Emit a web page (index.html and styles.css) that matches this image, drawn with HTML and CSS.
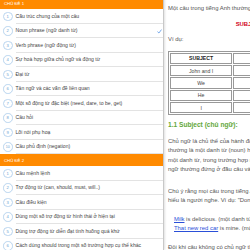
FILE: index.html
```html
<!DOCTYPE html>
<html lang="vi">
<head>
  <meta charset="UTF-8" />
  <meta name="viewport" content="width=device-width, initial-scale=1.0"/>
  <title>Ngữ pháp tiếng Anh</title>
  <link rel="stylesheet" href="styles.css">
</head>
<body>
  <div class="app">
    <aside class="menu">
      <div class="topic">Chủ đề 1</div>
      <ul class="lessons">
        <li><span class="num">1</span><span class="name">Cấu trúc chung của một câu</span></li>
        <li class="selected"><span class="num">2</span><span class="name">Noun phrase (ngữ danh từ)</span>
          <svg class="check" viewBox="0 0 10 10"><path d="M1.5 5.8 L3.8 8 L8.5 1.8" fill="none" stroke="#2f7de1" stroke-width="1.3" stroke-linecap="round" stroke-linejoin="round"/></svg>
        </li>
        <li><span class="num">3</span><span class="name">Verb phrase (ngữ động từ)</span></li>
        <li><span class="num">4</span><span class="name">Sự hoà hợp giữa chủ ngữ và động từ</span></li>
        <li><span class="num">5</span><span class="name">Đại từ</span></li>
        <li><span class="num">6</span><span class="name">Tân ngữ và các vấn đề liên quan</span></li>
        <li><span class="num">7</span><span class="name">Một số động từ đặc biệt (need, dare, to be, get)</span></li>
        <li><span class="num">8</span><span class="name">Câu hỏi</span></li>
        <li><span class="num">9</span><span class="name">Lối nói phụ hoạ</span></li>
        <li><span class="num small">10</span><span class="name">Câu phủ định (negation)</span></li>
      </ul>
      <div class="topic">Chủ đề 2</div>
      <ul class="lessons">
        <li><span class="num">1</span><span class="name">Câu mệnh lệnh</span></li>
        <li><span class="num">2</span><span class="name">Trợ động từ (can, should, must, will..)</span></li>
        <li><span class="num">3</span><span class="name">Câu điều kiện</span></li>
        <li><span class="num">4</span><span class="name">Dùng một số trợ động từ hình thái ở hiện tại</span></li>
        <li><span class="num">5</span><span class="name">Dùng trợ động từ diễn đạt tình huống quá khứ</span></li>
        <li><span class="num">6</span><span class="name">Cách dùng should trong một số trường hợp cụ thể khác</span></li>
      </ul>
    </aside>

    <main class="detail">
      <p class="intro">Một câu trong tiếng Anh thường bao gồm các thành phần sau đây:</p>
      <p class="formula">SUBJECT + VERB + COMPLEMENT + MODIFIER</p>
      <p class="intro">Ví dụ:</p>
      <table class="sample">
        <tr><th>SUBJECT</th><th>VERB</th><th>COMPLEMENT</th><th>MODIFIER</th></tr>
        <tr><td>John and I</td><td>ate</td><td>a pizza</td><td>last night</td></tr>
        <tr><td>We</td><td>studied</td><td>"present perfect"</td><td>last week</td></tr>
        <tr><td>He</td><td>runs</td><td></td><td>very fast</td></tr>
        <tr><td>I</td><td>like</td><td>walking</td><td></td></tr>
      </table>

      <h3 class="heading">1.1 Subject (chủ ngữ):</h3>
      <p class="text first">Chủ ngữ là chủ thể của hành động trong câu, thường đứng trước động từ (verb). Chủ ngữ<br>
        thường là một danh từ (noun) hoặc một ngữ danh từ (noun phrase - một nhóm từ kết thúc bằng<br>
        một danh từ, trong trường hợp này ngữ danh từ không được bắt đầu bằng một giới từ). Chủ<br>
        ngữ thường đứng ở đầu câu và quyết định việc chia động từ.</p>
      <p class="text">Chú ý rằng mọi câu trong tiếng Anh đều có chủ ngữ (Trong câu mệnh lệnh, chủ ngữ được ngầm<br>
        hiểu là người nghe. Ví dụ: "Don't move!" = Đứng im!).</p>
      <p class="text example"><a href="#">Milk</a> is delicious. (một danh từ)<br>
        <a href="#">That new red car</a> is mine. (một ngữ danh từ)</p>
      <p class="text">Đôi khi câu không có chủ ngữ thật sự, trong trường hợp đó, It hoặc There đóng vai trò chủ ngữ giả.</p>
    </main>
  </div>
</body>
</html>
```

FILE: styles.css
```css
body {
  margin: 0;
  padding: 0;
  background: #fff;
  font-family: "Liberation Sans", Arial, sans-serif;
  overflow: hidden;
}
.app {
  display: flex;
  width: 250px;
  height: 250px;
  overflow: hidden;
}
.menu {
  flex: none;
  width: 163px;
  margin-top: -3px;
  border-right: 1px solid #c8c8c8;
  box-shadow: 1px 0 2px rgba(0, 0, 0, 0.12);
  background: #fff;
}
.topic {
  height: 12px;
  padding-left: 4px;
  background: #ff8a00;
  color: #fff;
  font-size: 4.3px;
  line-height: 13px;
  text-transform: uppercase;
}
.lessons {
  list-style: none;
  margin: 0;
  padding: 0;
}
.lessons li {
  display: flex;
  align-items: center;
  height: 14.5px;
  padding-left: 3px;
  position: relative;
  white-space: nowrap;
  overflow: hidden;
}
.num {
  flex: none;
  display: flex;
  align-items: center;
  justify-content: center;
  width: 7.5px;
  height: 7.5px;
  border: 0.7px solid #b9d5ef;
  border-radius: 50%;
  color: #6c9fd2;
  font-size: 4.2px;
}
.num.small {
  font-size: 3.6px;
}
.name {
  flex: 1;
  align-self: stretch;
  display: flex;
  align-items: center;
  margin-left: 3px;
  border-bottom: 0.7px solid #e3e3e3;
  color: #444;
  font-size: 5.1px;
}
.check {
  position: absolute;
  right: 1px;
  top: 5px;
  width: 5px;
  height: 5px;
}
.detail {
  flex: none;
  width: 270px;
  padding: 4px 4px 0 4px;
  color: #555;
  font-size: 5.9px;
  line-height: 9.5px;
  white-space: nowrap;
}
.detail p {
  margin: 0;
}
.intro {
  margin-bottom: 6px !important;
}
.formula {
  text-align: center;
  color: #d0021b;
  font-weight: bold;
  margin-bottom: 6px !important;
}
.sample {
  width: 256px;
  border: 0.7px solid #999;
  border-spacing: 1px;
  table-layout: fixed;
}
.sample th,
.sample td {
  border: 0.7px solid #999;
  height: 9.4px;
  padding: 0;
  text-align: center;
  font-size: 5.2px;
  line-height: 8px;
  color: #444;
}
.sample th {
  font-weight: bold;
  color: #222;
}
.heading {
  margin: 5px 0 7px 0;
  color: #63a739;
  font-size: 6.6px;
  font-weight: bold;
}
.text {
  margin-bottom: 9px !important;
}
.text.first {
  margin-bottom: 12px !important;
}
.example {
  padding-left: 6px;
}
.example a {
  color: #2a4fd8;
}
```
